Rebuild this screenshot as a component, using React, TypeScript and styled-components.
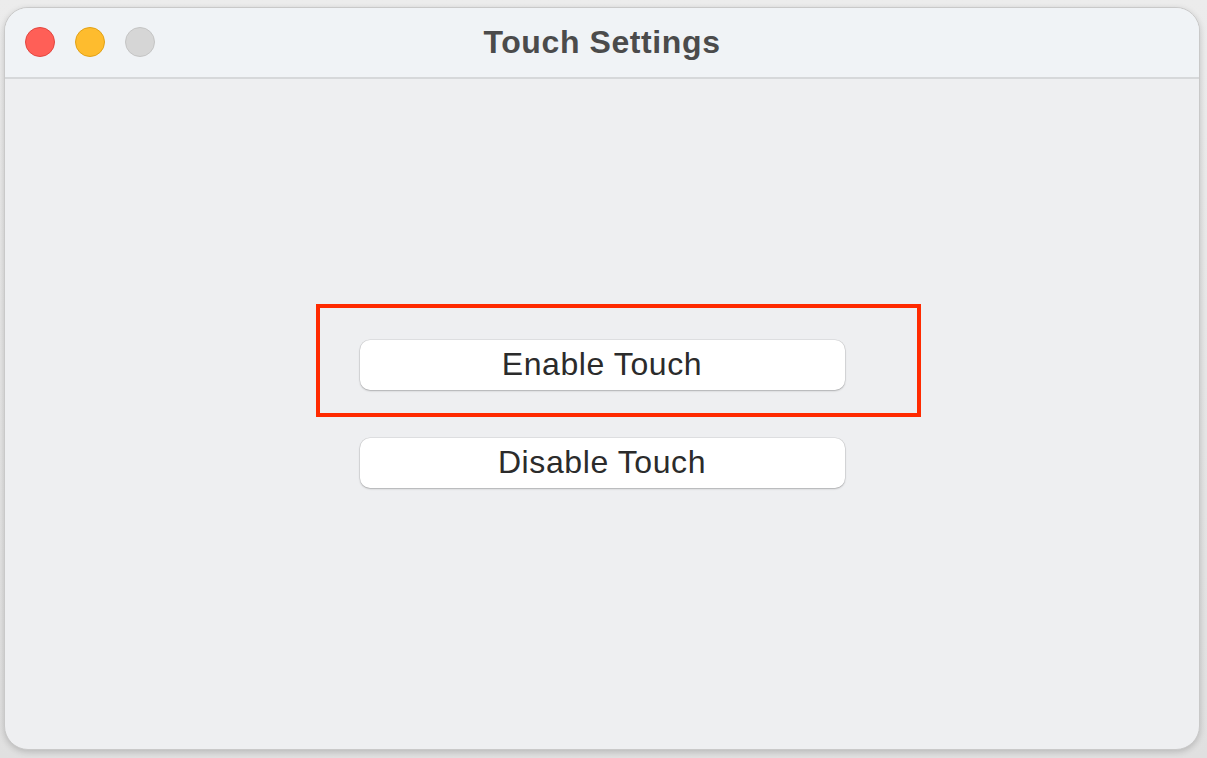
import styled, { createGlobalStyle } from 'styled-components';

const GlobalStyle = createGlobalStyle`
  html, body {
    margin: 0;
    padding: 0;
    background: #e4e4e4;
    font-family: "Liberation Sans", Arial, sans-serif;
  }
`;

type LightColor = 'close' | 'minimize' | 'zoom';

const lightColors: Record<LightColor, { fill: string; border: string }> = {
  close: { fill: '#ff5f57', border: '#e2463f' },
  minimize: { fill: '#febc2e', border: '#e1a116' },
  zoom: { fill: '#d6d6d6', border: '#c4c4c4' },
};

const App = () => {
  return (
    <>
      <GlobalStyle />
      <Page>
        <Window>
          <TitleBar>
            <Lights>
              <Light color="close" />
              <Light color="minimize" />
              <Light color="zoom" />
            </Lights>
            <Title>Touch Settings</Title>
          </TitleBar>
          <Body>
            <Highlight>
              <Button>Enable Touch</Button>
            </Highlight>
            <Button>Disable Touch</Button>
          </Body>
        </Window>
      </Page>
    </>
  );
};

const Page = styled.div`
  width: 1207px;
  height: 758px;
  box-sizing: border-box;
  padding: 7px 7px 8px 4px;
  display: flex;
  background: linear-gradient(180deg, #ececec 0%, #e0e0e0 100%);
`;

const Window = styled.div`
  flex: 1;
  display: flex;
  flex-direction: column;
  background: #eeeff1;
  border: 1px solid #c9c9c9;
  border-radius: 24px;
  overflow: hidden;
  box-shadow: 0 2px 6px rgba(0, 0, 0, 0.18);
`;

const TitleBar = styled.div`
  height: 69px;
  flex-shrink: 0;
  display: flex;
  align-items: center;
  justify-content: center;
  position: relative;
  background: #f0f3f6;
  border-bottom: 2px solid #d6d8da;
`;

const Lights = styled.div`
  position: absolute;
  left: 20px;
  top: 19px;
  display: flex;
  gap: 20px;
`;

const Light = styled.span<{ color: LightColor }>`
  width: 30px;
  height: 30px;
  box-sizing: border-box;
  border-radius: 50%;
  background: ${({ color }) => lightColors[color].fill};
  border: 1px solid ${({ color }) => lightColors[color].border};
`;

const Title = styled.h1`
  margin: 0;
  font-size: 32px;
  font-weight: 700;
  color: #4b4b4b;
  letter-spacing: 0.6px;
`;

const Body = styled.div`
  flex: 1;
  display: flex;
  flex-direction: column;
  align-items: center;
  padding-top: 225px;
  gap: 21px;
`;

const Highlight = styled.div`
  box-sizing: border-box;
  height: 113px;
  margin-left: 32px;
  border: 4px solid #ff2a00;
  display: flex;
  padding: 32px 72px 0 40px;
`;

const Button = styled.button`
  width: 485px;
  height: 50px;
  box-sizing: border-box;
  border: none;
  border-radius: 10px;
  background: #ffffff;
  box-shadow: 0 0 0 0.5px rgba(0, 0, 0, 0.12), 0 1px 2px rgba(0, 0, 0, 0.22);
  font-family: "Liberation Sans", Arial, sans-serif;
  font-size: 32px;
  letter-spacing: 0.6px;
  color: #2b2b2b;
  padding: 0 0 2px;
  cursor: pointer;
`;

export default App;
